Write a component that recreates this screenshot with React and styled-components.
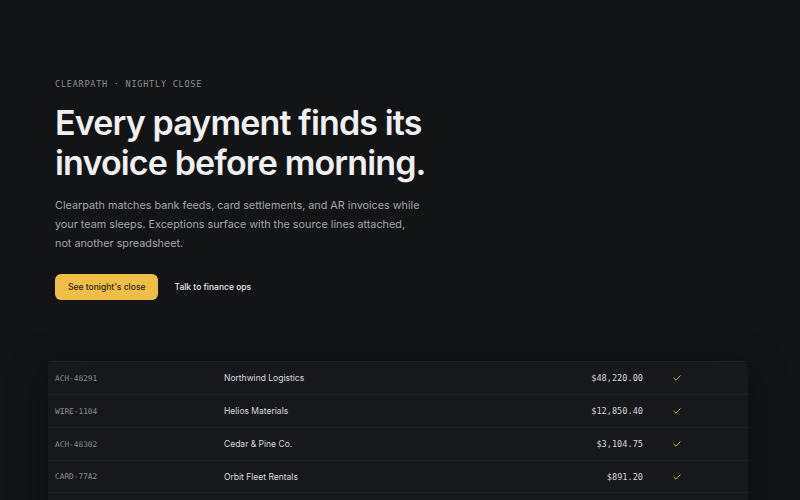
import styled, { createGlobalStyle } from 'styled-components'

const GlobalStyle = createGlobalStyle`
  html, body {
    margin: 0;
    padding: 0;
    background: #131416;
  }
  body {
    font-family: Inter, "Noto Sans", sans-serif;
    color: #ececee;
  }
`

const Page = styled.main`
  height: 500px;
  overflow: hidden;
  padding: 79px 52px 0 55px;
  box-sizing: border-box;
`

const Hero = styled.section`
  display: flex;
  flex-direction: column;
  align-items: flex-start;
`

const Eyebrow = styled.p`
  margin: 0;
  font-family: "DejaVu Sans Mono", "Liberation Mono", monospace;
  font-size: 8.5px;
  line-height: 10px;
  letter-spacing: 0.09em;
  color: #8b8e94;
  text-transform: uppercase;
`

const Title = styled.h1`
  margin: 14px 0 0;
  font-size: 34px;
  line-height: 40px;
  font-weight: 600;
  letter-spacing: -0.025em;
  color: #f0f0f2;
`

const Lede = styled.p`
  margin: 13px 0 0;
  max-width: 390px;
  font-size: 10.8px;
  line-height: 19px;
  color: #a3a6ac;
`

const Actions = styled.div`
  display: flex;
  align-items: center;
  gap: 16px;
  margin-top: 21px;
`

const Button = styled.button`
  font-family: Inter, sans-serif;
  font-size: 8.5px;
  font-weight: 500;
  border: none;
  cursor: pointer;
  height: 26px;
  padding: 0 ${(p) => (p.$primary ? '13px' : '0')};
  border-radius: 6px;
  background: ${(p) => (p.$primary ? '#efbf45' : 'transparent')};
  color: ${(p) => (p.$primary ? '#2a2310' : '#e6e7ea')};
`

const Ledger = styled.div`
  margin: 61px 0 0 -7px;
  padding-bottom: 40px;
  background: #17181c;
  border-radius: 6px;
  box-shadow: 0 10px 40px rgba(0, 0, 0, 0.35);
`

const Row = styled.div`
  display: grid;
  grid-template-columns: 169px 1fr 120px 68px;
  align-items: center;
  height: 33px;
  padding: 0 37px 0 7px;
  border-top: 1px solid rgba(255, 255, 255, 0.045);
  border-bottom: ${(p) => (p.$last ? '1px solid rgba(255, 255, 255, 0.045)' : 'none')};
  box-sizing: border-box;
`

const Ref = styled.span`
  font-family: "DejaVu Sans Mono", "Liberation Mono", monospace;
  font-size: 7.8px;
  color: #8b8e94;
`

const Party = styled.span`
  font-size: 8.5px;
  color: #d9dbdf;
`

const Amount = styled.span`
  font-family: "DejaVu Sans Mono", "Liberation Mono", monospace;
  font-size: 8.6px;
  color: #d4d6da;
  text-align: right;
`

const Status = styled.span`
  display: flex;
  justify-content: center;
`

const rows = [
  ['ACH-48291', 'Northwind Logistics', '$48,220.00'],
  ['WIRE-1104', 'Helios Materials', '$12,850.40'],
  ['ACH-48302', 'Cedar & Pine Co.', '$3,104.75'],
  ['CARD-77A2', 'Orbit Fleet Rentals', '$891.20'],
]

function Check() {
  return (
    <svg width="8" height="6" viewBox="0 0 8 6" fill="none">
      <path d="M0.8 3 L3 5.2 L7.2 0.8" stroke="#c9b04a" strokeWidth="1" strokeLinecap="round" strokeLinejoin="round" />
    </svg>
  )
}

export default function App() {
  return (
    <>
      <GlobalStyle />
      <Page>
        <Hero>
          <Eyebrow>Clearpath · Nightly close</Eyebrow>
          <Title>
            Every payment finds its
            <br />
            invoice before morning.
          </Title>
          <Lede>
            Clearpath matches bank feeds, card settlements, and AR invoices while
            <br />
            your team sleeps. Exceptions surface with the source lines attached,
            <br />
            not another spreadsheet.
          </Lede>
          <Actions>
            <Button $primary>See tonight's close</Button>
            <Button>Talk to finance ops</Button>
          </Actions>
        </Hero>
        <Ledger>
          {rows.map(([ref, party, amount], i) => (
            <Row key={ref} $last={i === rows.length - 1}>
              <Ref>{ref}</Ref>
              <Party>{party}</Party>
              <Amount>{amount}</Amount>
              <Status>
                <Check />
              </Status>
            </Row>
          ))}
        </Ledger>
      </Page>
    </>
  )
}
